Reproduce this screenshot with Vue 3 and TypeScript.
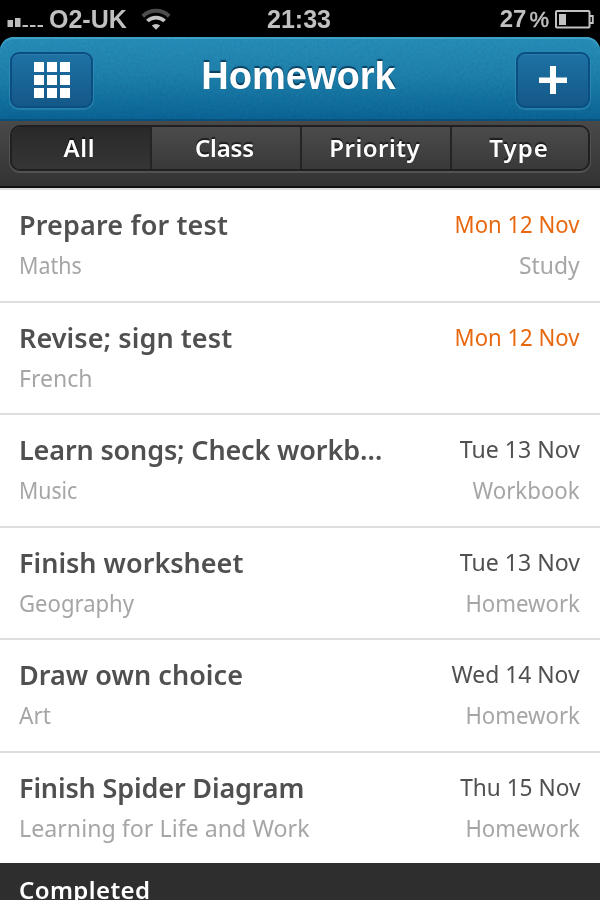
<script setup lang="ts">
interface Label {
  text: string
  gap: number
  squeeze: number
}

interface Task {
  title: Label
  subject: Label
  due: Label
  kind: Label
  urgent?: boolean
}

const label = (text: string, gap = 0): Label => ({ text, gap, squeeze: 1 })
const narrow = (text: string, squeeze: number): Label => ({ text, gap: 0, squeeze })
const fit = (item: Label) => ({ '--gap': `${item.gap}px`, '--squeeze': item.squeeze })

const tabs: Label[] = [label('All', 0.7), label('Class', -0.2), label('Priority', 0.5), label('Type', 1.1)]

const tasks: Task[] = [
  { title: label('Prepare for test', 0.15), subject: narrow('Maths', 0.893), due: narrow('Mon 12 Nov', 0.922), kind: narrow('Study', 0.953), urgent: true },
  { title: label('Revise; sign test', 0.08), subject: narrow('French', 0.96), due: narrow('Mon 12 Nov', 0.922), kind: label(''), urgent: true },
  { title: label('Learn songs; Check workb…', -0.15), subject: narrow('Music', 0.886), due: narrow('Tue 13 Nov', 0.962), kind: narrow('Workbook', 0.927) },
  { title: label('Finish worksheet'), subject: narrow('Geography', 0.92), due: narrow('Tue 13 Nov', 0.962), kind: narrow('Homework', 0.924) },
  { title: label('Draw own choice', 0.04), subject: narrow('Art', 0.94), due: narrow('Wed 14 Nov', 0.952), kind: narrow('Homework', 0.924) },
  { title: label('Finish Spider Diagram', -0.15), subject: narrow('Learning for Life and Work', 0.967), due: narrow('Thu 15 Nov', 0.944), kind: narrow('Homework', 0.924) },
]
</script>

<template>
  <div class="screen">
    <div class="status">
      <div class="carrier">
        <svg class="signal" width="36" height="10" viewBox="0 0 36 10" fill="#bdbdbd">
          <rect x="0.500" y="2" width="5.5" height="7" />
          <rect x="8" y="0" width="5.5" height="9" />
          <rect x="15.500" y="7" width="5.5" height="2" />
          <rect x="23" y="7" width="5.5" height="2" />
          <rect x="30.500" y="7" width="5.5" height="2" />
        </svg>
        <span class="carrier-name">O2-UK</span>
        <svg class="wifi" width="30" height="22" viewBox="0 0 30 22" fill="none">
          <path d="M1.8 8.2a19 19 0 0 1 26.4 0" stroke="#4c4c4c" stroke-width="4" />
          <path d="M6.4 13a12.4 12.4 0 0 1 17.2 0" stroke="#c4c4c4" stroke-width="3.8" />
          <path d="M10.8 17.600a6 6 0 0 1 8.400 0L15 21.8z" fill="#c4c4c4" />
        </svg>
      </div>
      <span class="clock">21:33</span>
      <div class="power">
        <span class="percent">27<i>%</i></span>
        <svg width="39" height="19" viewBox="0 0 39 19" fill="none">
          <rect x="1" y="1" width="33.5" height="16.5" rx="1" stroke="#c2c2c2" stroke-width="2" />
          <rect x="4" y="4" width="7" height="11" fill="#c2c2c2" />
          <path d="M35 6h2.8v7H35" stroke="#c2c2c2" stroke-width="1.8" />
        </svg>
      </div>
    </div>

    <header class="navbar">
      <svg class="grain" width="600" height="84">
        <filter id="grain">
          <feTurbulence type="fractalNoise" baseFrequency="0.35" numOctaves="2" />
          <feColorMatrix values="1 0 0 0 0  1 0 0 0 0  1 0 0 0 0  0 0 0 0 1" />
        </filter>
        <rect width="600" height="84" filter="url(#grain)" />
      </svg>
      <button class="nav-button menu" aria-label="Menu">
        <span v-for="n in 9" :key="n" class="dot"></span>
      </button>
      <h1>Homework</h1>
      <button class="nav-button add" aria-label="Add">
        <svg width="28" height="28" viewBox="0 0 28 28" fill="#fff">
          <path d="M11 0h6v11.500h11v5.500H17v11H11V17H0v-5.500h11z" />
        </svg>
      </button>
    </header>

    <div class="filterbar">
      <div class="segments">
        <button v-for="(tab, i) in tabs" :key="tab.text" class="segment" :class="{ active: i === 0 }">
          <span class="fitted" :style="fit(tab)">{{ tab.text }}</span>
        </button>
      </div>
    </div>

    <main class="list">
      <article v-for="task in tasks" :key="task.title.text" class="task">
        <div class="line">
          <span class="title fitted" :style="fit(task.title)">{{ task.title.text }}</span>
          <span class="due fitted" :class="{ urgent: task.urgent }" :style="fit(task.due)">{{ task.due.text }}</span>
        </div>
        <div class="line detail">
          <span class="fitted" :style="fit(task.subject)">{{ task.subject.text }}</span>
          <span class="fitted" :style="fit(task.kind)">{{ task.kind.text }}</span>
        </div>
      </article>
    </main>

    <div class="section">Completed</div>
  </div>
</template>

<style>
body {
  margin: 0;
  background: #000;
}
</style>

<style scoped>
.screen {
  width: 600px;
  height: 900px;
  overflow: hidden;
  display: flex;
  flex-direction: column;
  background: #000;
  font-family: 'Trebuchet MS', 'Noto Sans', sans-serif;
}

/* Trailing letter-spacing is cancelled so right-aligned text stays flush. */
.fitted {
  letter-spacing: var(--gap);
  margin-right: calc(-1 * var(--gap));
  transform: scaleX(var(--squeeze));
  transform-origin: left center;
}

.fitted:last-child {
  transform-origin: right center;
}

.status {
  flex: none;
  height: 37px;
  display: grid;
  grid-template-columns: 1fr auto 1fr;
  align-items: center;
  padding: 0 6px 0 7px;
  color: #c0c0c0;
  font: bold 25px/37px 'Liberation Sans', sans-serif;
}

.carrier,
.power {
  display: flex;
  align-items: center;
}

.carrier-name {
  margin-left: 6px;
}

.clock {
  margin-right: 3px;
}

.signal {
  margin-top: 8px;
}

.wifi {
  margin-left: 14px;
}

.power {
  justify-content: flex-end;
  gap: 6px;
}

.percent {
  font-size: 24px;
}

.percent i {
  font-size: 22px;
  font-style: normal;
  font-weight: normal;
  -webkit-text-stroke: 0.5px #c0c0c0;
  margin-left: 3px;
}

.navbar {
  flex: none;
  box-sizing: border-box;
  height: 84px;
  position: relative;
  display: flex;
  align-items: center;
  justify-content: space-between;
  padding: 1px 10px 0;
  overflow: hidden;
  border-radius: 14px 14px 0 0;
  background: linear-gradient(#2487b4, #1c79a6 45%, #085d8d);
  box-shadow: inset 0 2px 0 #3c9cc2, inset 0 -2px 0 #064d77;
}

.grain {
  position: absolute;
  inset: 0;
  opacity: 0.09;
  mix-blend-mode: overlay;
}

.navbar h1 {
  margin: 0 12px 7px 0;
  z-index: 1;
  color: #fff;
  font: bold 38px/44px 'Liberation Sans', sans-serif;
  text-shadow: 0 -2px 1px rgba(0, 35, 60, 0.7);
}

.nav-button {
  z-index: 1;
  box-sizing: border-box;
  width: 83px;
  height: 56px;
  padding: 0;
  border: 2px solid #0b4f80;
  border-radius: 9px;
  background: linear-gradient(#1e72a5, #145888);
  box-shadow: 0 1px 1px 1px rgba(70, 160, 200, 0.4), inset 0 1px 0 #2a7cac;
}

.menu {
  display: grid;
  grid-template-columns: repeat(3, 10px);
  grid-auto-rows: 10px;
  gap: 3px;
  place-content: center;
}

.dot {
  background: #fff;
}

.add {
  width: 74px;
  display: flex;
  align-items: center;
  justify-content: center;
}

.filterbar {
  flex: none;
  box-sizing: border-box;
  height: 67px;
  padding: 4px 10px 0;
  background: linear-gradient(#494949, #333);
  border-bottom: 2px solid #111;
}

.segments {
  box-sizing: border-box;
  height: 46px;
  display: grid;
  grid-template-columns: 140px 150px 150px 1fr;
  border: 2px solid #202020;
  border-radius: 10px;
  overflow: hidden;
  box-shadow: 0 1px 0 1px #525252;
}

.segment {
  padding: 0 3px 0 0;
  border: 0;
  border-right: 2px solid #242424;
  background: linear-gradient(#4b4b4b, #393939);
  color: #fff;
  font: 600 24px/42px 'Trebuchet MS', 'Noto Sans', sans-serif;
  text-shadow: 0 -2px 1px rgba(0, 0, 0, 0.6);
}

.segment:last-child {
  border-right: 0;
}

.segment.active {
  padding-right: 4px;
  background: linear-gradient(#292929, #353535);
}

.list {
  flex: none;
  background: #fff;
  border-top: 2px solid #dedede;
}

.task {
  box-sizing: border-box;
  height: 112.6px;
  padding: 15px 20px 0 19px;
  border-bottom: 2px solid #dedede;
}

.task:last-child {
  height: 110.5px;
  border-bottom: 0;
}

.line {
  height: 40px;
  display: flex;
  align-items: center;
  justify-content: space-between;
  font-size: 24px;
  line-height: 40px;
  white-space: nowrap;
}

.title {
  color: #505050;
  font-size: 27px;
  font-weight: 600;
}

.due {
  padding-bottom: 2px;
  color: #505050;
}

.due.urgent {
  color: #e8680f;
}

.detail {
  color: #a6a6a6;
}

.section {
  flex: 1;
  padding: 7px 19px 0;
  background: #2e2e2e;
  color: #fff;
  font-size: 24px;
  font-weight: 600;
  letter-spacing: 0.4px;
  line-height: 40px;
}
</style>
